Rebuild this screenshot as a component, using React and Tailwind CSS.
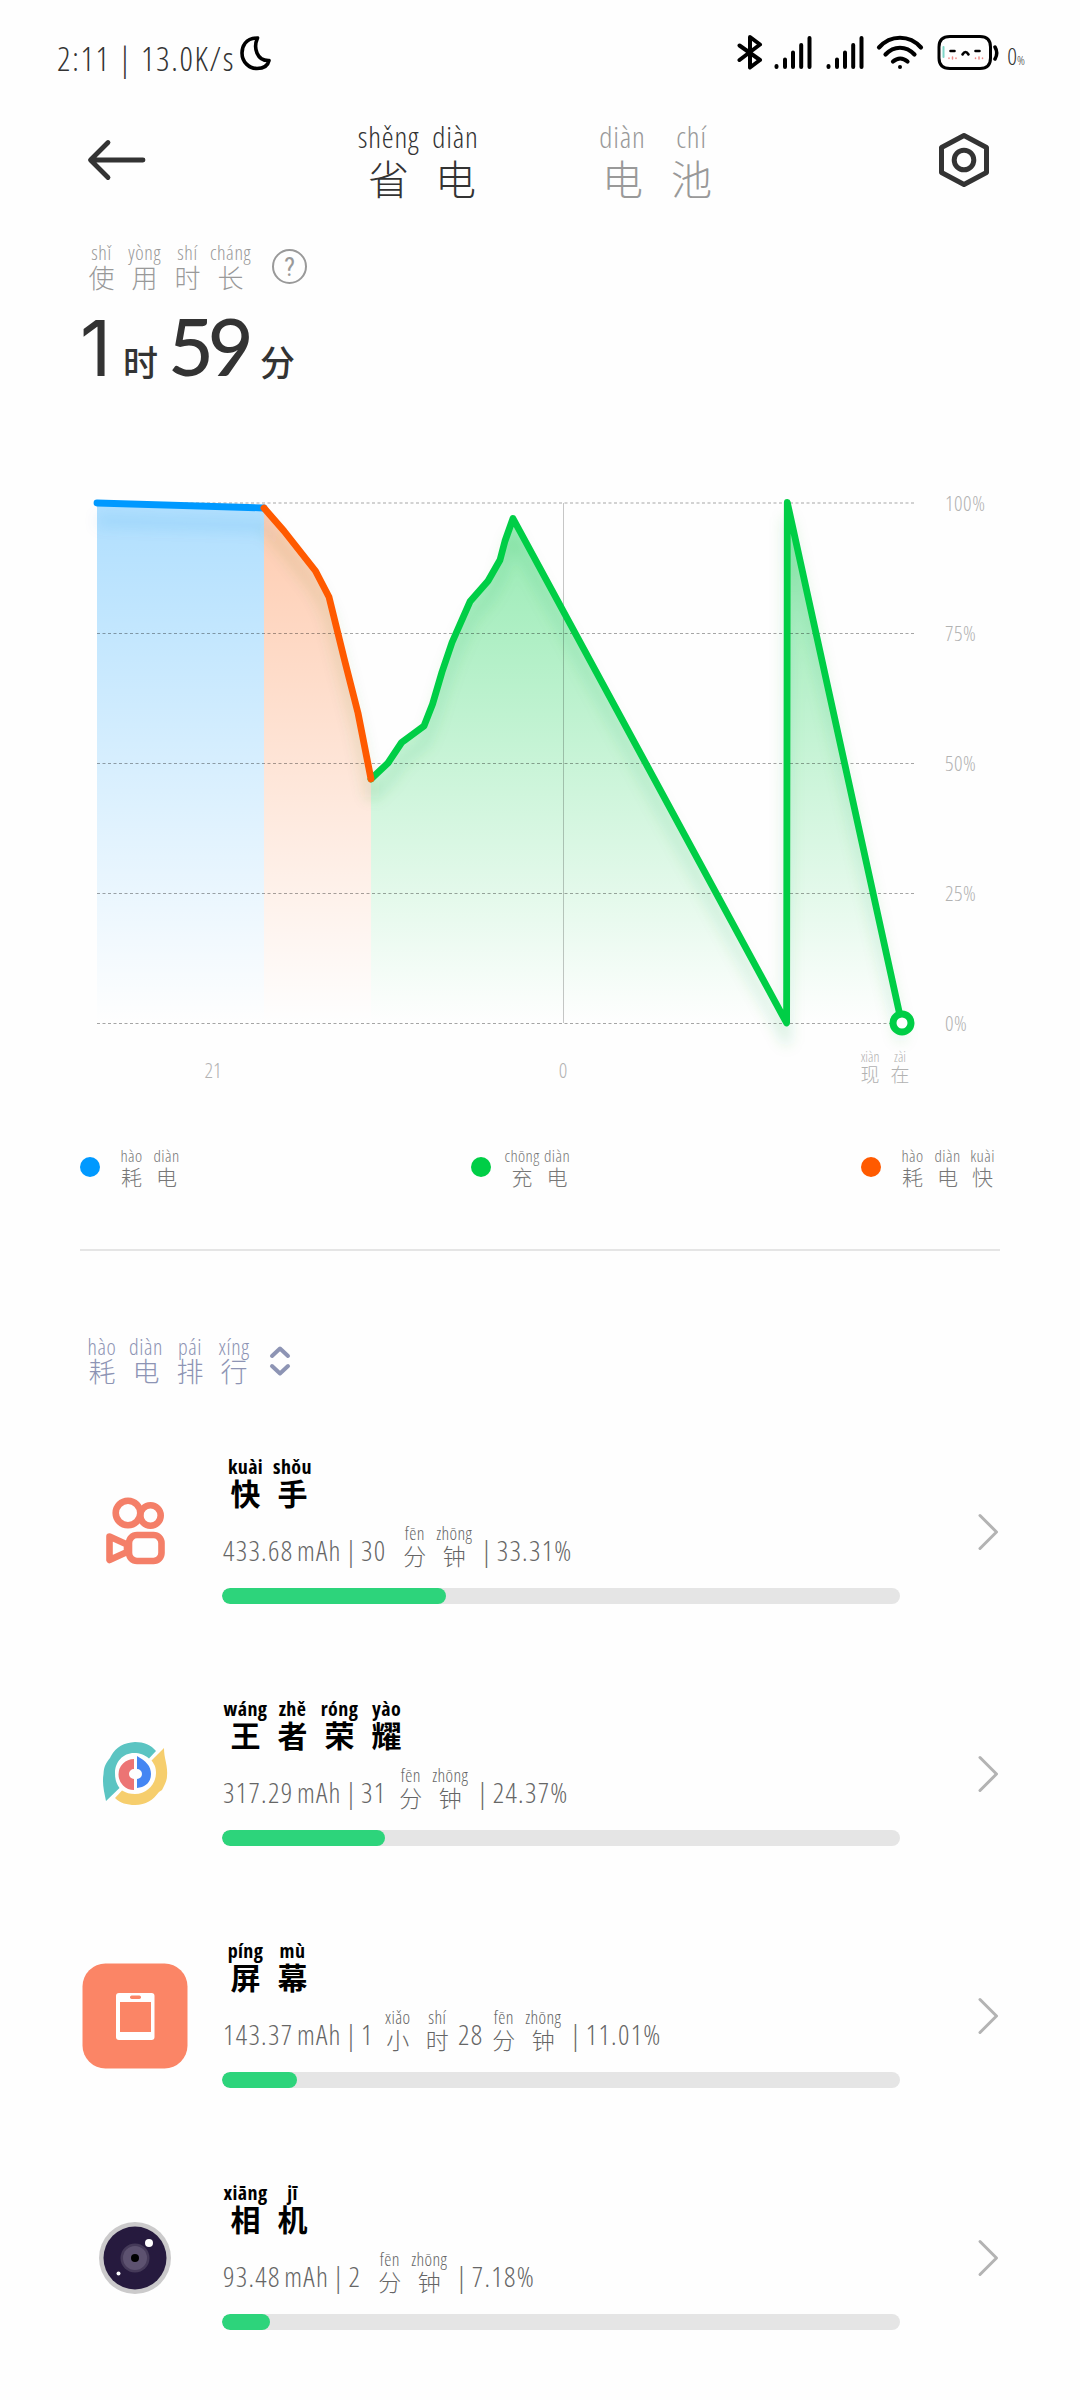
import React, { useState } from "react";

const COLORS = { drain: "#0099ff", charge: "#00ce46", fast: "#ff5a00" };

const drainPoints = "97,503 264,508";
const fastPoints = "264,508 284,531 315.5,571 329,597 344,658 358,713 371,779";
const chargePoints =
  "371,779 388,763 401.6,742.5 424,726 432.6,704 442,672 452,642.5 470,601.6 488,581 500,560 505,541 513,518.5 786.6,1023 787.3,502.5 901.6,1023";

const gridLines = [
  { y: 503, label: "100%" },
  { y: 633.5, label: "75%" },
  { y: 763.5, label: "50%" },
  { y: 893.5, label: "25%" },
  { y: 1023.5, label: "0%" },
];

const legend = [
  { color: "bg-[#0099ff]", chars: [["耗", "hào"], ["电", "diàn"]] },
  { color: "bg-[#00ce46]", chars: [["充", "chōng"], ["电", "diàn"]] },
  { color: "bg-[#ff5a00]", chars: [["耗", "hào"], ["电", "diàn"], ["快", "kuài"]] },
];

const minutes = [["分", "fēn"], ["钟", "zhōng"]];

const apps = [
  {
    id: "kuaishou",
    icon: <KuaishouIcon />,
    name: [["快", "kuài"], ["手", "shǒu"]],
    percent: 33,
    detail: [
      { text: "433.68 mAh | 30", width: "w-[173px]" },
      { chars: minutes },
      { text: "| 33.31%", width: "pl-[7px]" },
    ],
  },
  {
    id: "wangzhe",
    icon: <WangzheIcon />,
    name: [["王", "wáng"], ["者", "zhě"], ["荣", "róng"], ["耀", "yào"]],
    percent: 24,
    detail: [
      { text: "317.29 mAh | 31", width: "w-[169px]" },
      { chars: minutes },
      { text: "| 24.37%", width: "pl-[7px]" },
    ],
  },
  {
    id: "screen",
    icon: <ScreenIcon />,
    name: [["屏", "píng"], ["幕", "mù"]],
    percent: 11,
    detail: [
      { text: "143.37 mAh | 1", width: "w-[156px]" },
      { chars: [["小", "xiǎo"], ["时", "shí"]] },
      { text: "28", width: "w-[27px]" },
      { chars: minutes },
      { text: "| 11.01%", width: "pl-[7px]" },
    ],
  },
  {
    id: "camera",
    icon: <CameraIcon />,
    name: [["相", "xiāng"], ["机", "jī"]],
    percent: 7.1,
    detail: [
      { text: "93.48 mAh | 2", width: "w-[148px]" },
      { chars: minutes },
      { text: "| 7.18%", width: "pl-[7px]" },
    ],
  },
];

// Chinese characters with their pinyin above
function Pinyin({ chars, col, top, bottom, className = "" }) {
  return (
    <div className={`flex ${className}`}>
      {chars.map(([hanzi, py], i) => (
        <div key={i} className={`flex flex-col items-center shrink-0 whitespace-nowrap ${col}`}>
          <span className={top}>{py}</span>
          <span className={`font-['Noto_Sans_CJK_SC',sans-serif] ${bottom}`}>{hanzi}</span>
        </div>
      ))}
    </div>
  );
}

function KuaishouIcon() {
  return (
    <svg width="106" height="106" viewBox="0 0 106 106" fill="none" stroke="#f47f68" strokeWidth="6.6" strokeLinejoin="round">
      <circle cx="46" cy="34" r="12.3" />
      <circle cx="68.5" cy="36.5" r="10.2" />
      <rect x="47" y="56" width="32.5" height="26" rx="8" />
      <path d="M27.500 57.500 L45 65.500 V73 L27.500 81 Z" />
    </svg>
  );
}

function WangzheIcon() {
  return (
    <svg width="106" height="106" viewBox="0 0 106 106">
      <path d="M24 80 C22 70 20 62 21.500 53 C22 45 24 42 28 37 L29 35 C34 26 42 21.500 53 21 C62 21 69 24 74 30 L67 37.500 C62 33.500 58 32 52 32 C41 32 33 41 33 52 C33 58 34 62 37.500 67 Z" fill="#5bc4c2" />
      <path d="M82 27 C82 38 86 44 85 55 C85 60 82 65 80 69 L77 71 C71 79 64 84 53 84 C45 84 38 82 33 77 L40 69.500 C44 72 48 73 53 73 C65 73 74 63 74 52 C74 47 73 44 69.500 39.500 Z" fill="#f6ce6d" />
      <path d="M52 38 V48 A5 5 0 0 0 52 58 V69 A15.500 15.500 0 0 1 52 38 Z" fill="#ec7474" />
      <path d="M55 35 C64 40 69 45 69 53 C69 61 64 66 55 67 V58 A5 5 0 0 0 55 48 Z" fill="#4586f3" />
    </svg>
  );
}

function ScreenIcon() {
  return (
    <svg width="106" height="106" viewBox="0 0 106 106">
      <rect x="0.500" y="0.500" width="105" height="105" rx="23" fill="#fb8566" />
      <rect x="34" y="30" width="38.500" height="47" rx="3" fill="#fff" />
      <rect x="38" y="39" width="31" height="30" fill="#fb8566" />
      <rect x="48" y="32.500" width="11" height="3.500" rx="1.700" fill="#fb8566" />
    </svg>
  );
}

function CameraIcon() {
  return (
    <svg width="106" height="106" viewBox="0 0 106 106">
      <circle cx="53" cy="53" r="36" fill="#cbcacb" />
      <circle cx="53" cy="53" r="31.500" fill="#261a3e" />
      <circle cx="53" cy="53" r="14.500" fill="#453a59" />
      <circle cx="53" cy="53" r="12" fill="#5d5270" />
      <circle cx="53" cy="53" r="4" fill="#000" />
      <circle cx="67" cy="38" r="4" fill="#fff" />
      <circle cx="36.500" cy="68.500" r="2" fill="#fff" />
    </svg>
  );
}

function Signal() {
  return (
    <svg width="38" height="36" viewBox="0 0 38 36" stroke="#000" strokeWidth="4" strokeLinecap="round">
      <path d="M2.500 32 V33 M11 25.500 V33 M19 18.500 V33 M27.200 11 V33 M35.500 4 V33" />
    </svg>
  );
}

function StatusBar() {
  return (
    <div className="flex h-[104px] pl-[57px] pr-[55px]">
      <span className="mt-[37px] w-[180px] whitespace-nowrap text-[33px] leading-[44px] tracking-[1.7px] text-[#333]">
        2:11 | 13.0K/s
      </span>
      <svg className="mt-[34px]" width="38" height="38" viewBox="0 0 38 38" fill="none" stroke="#000" strokeWidth="3.600" strokeLinejoin="round">
        <path d="M20.500 4 C8 4 5 13 5 19 C5 28 12 34.500 20 34.500 C27 34.500 31 31 32 26.500 C20 27 16 14 20.500 4 Z" />
      </svg>
      <div className="ml-auto flex pt-[34px]">
        <svg width="26" height="36" viewBox="0 0 26 36" fill="none" stroke="#000" strokeWidth="4" strokeLinecap="round" strokeLinejoin="round">
          <path d="M2.500 11.500 L23 26 L13 33.500 V3 L23 10.500 L2.500 26" />
        </svg>
        <div className="ml-[11px]"><Signal /></div>
        <div className="ml-[14px]"><Signal /></div>
        <svg className="ml-[12px]" width="48" height="36" viewBox="0 0 48 36" fill="none" stroke="#000" strokeWidth="4.200" strokeLinecap="round">
          <path d="M3 13.500 C14.500 0.500 33.500 0.500 45 13.500" />
          <path d="M9.500 20.500 C18 11.500 30 11.500 38.500 20.500" />
          <path d="M17 27.500 C21.500 23.500 27 23.500 31.500 27.500" />
          <circle cx="24" cy="33" r="2" fill="#000" stroke="none" />
        </svg>
        <svg className="ml-[12px]" width="64" height="38" viewBox="0 0 64 38" fill="none" strokeLinecap="round">
          <path d="M14 2.500 H44 Q54.500 2.500 54.500 13 V24 Q54.500 34.500 44 34.500 H14 Q3 34.500 3 24 V13 Q3 2.500 14 2.500 Z" stroke="#000" strokeWidth="3" />
          <path d="M59 13 Q62.500 19 59 25" stroke="#000" strokeWidth="3.500" />
          <path d="M7.500 13 V23" stroke="#7fd6c8" strokeWidth="2" />
          <path d="M14.500 17 H18.500 M39.500 17 H43.500 M26.500 20.500 Q29.500 15.500 32.500 20.500" stroke="#000" strokeWidth="2.600" />
          <path d="M13 24 V24.500 M16.500 23 V25 M20 24 V24.500 M39.500 24 V24.500 M43 23 V25 M46.500 24 V24.500" stroke="#ee8a86" strokeWidth="1.500" />
        </svg>
        <span className="ml-[7px] mt-[8px] flex items-baseline text-[24px] leading-[28px] text-[#333]">
          0<span className="text-[13px]">%</span>
        </span>
      </div>
    </div>
  );
}

function Header() {
  const [tab, setTab] = useState("saver");
  const style = {
    top: "text-[30px] leading-[32px] h-[34px] tracking-[0.8px]",
    bottom: "text-[41px] leading-[44px]",
  };

  return (
    <div className="flex h-[112px] items-start">
      <svg className="ml-[86px] mt-[34px]" width="60" height="44" viewBox="0 0 60 44" fill="none" stroke="#333" strokeWidth="4.800" strokeLinecap="round" strokeLinejoin="round">
        <path d="M57 22 H5 M22 4.500 L4.500 22 L22 39.500" />
      </svg>
      <button onClick={() => setTab("saver")} className={`ml-[209px] mt-[17px] ${tab === "saver" ? "text-[#333]" : "text-[#999]"}`}>
        <Pinyin chars={[["省", "shěng"], ["电", "diàn"]]} col="w-[67px]" {...style} />
      </button>
      <button onClick={() => setTab("battery")} className={`ml-[99px] mt-[17px] ${tab === "battery" ? "text-[#333]" : "text-[#999]"}`}>
        <Pinyin chars={[["电", "diàn"], ["池", "chí"]]} col="w-[69px]" {...style} />
      </button>
      <svg className="ml-[210px] mt-[27px]" width="56" height="58" viewBox="0 0 56 58" fill="none" stroke="#333" strokeWidth="5" strokeLinejoin="round">
        <path d="M28 4.500 L50.500 16.500 V41.500 L28 53.500 L5.500 41.500 V16.500 Z" />
        <circle cx="28" cy="29" r="9.800" />
      </svg>
    </div>
  );
}

function UsageTime() {
  return (
    <div className="mt-[27px] h-[237px] pl-[80px]">
      <div className="flex text-[#999]">
        <Pinyin
          chars={[["使", "shǐ"], ["用", "yòng"], ["时", "shí"], ["长", "cháng"]]}
          col="w-[43px]"
          top="text-[20px] leading-[20px] h-[20px] tracking-[0.6px]"
          bottom="text-[26px] leading-[28px]"
        />
        <div className="ml-[20px] mt-[6px] flex size-[35px] items-center justify-center rounded-full border-[2.5px] border-[#999] font-[Roboto,sans-serif] text-[26px] font-normal leading-none">
          ?
        </div>
      </div>
      <div className="mt-[9px] flex items-baseline text-[#333]">
        <span className="w-[43px] font-[Inter,sans-serif] text-[77px] font-normal leading-[92px]">1</span>
        <span className="w-[45px] font-['Noto_Sans_CJK_SC',sans-serif] text-[35px] font-medium">时</span>
        <span className="w-[92px] font-[Lato,sans-serif] text-[79px] font-medium leading-[92px] tracking-[-6px]">59</span>
        <span className="font-['Noto_Sans_CJK_SC',sans-serif] text-[35px] font-medium">分</span>
      </div>
    </div>
  );
}

function Area({ id, color, opacity, points, from, to }) {
  return (
    <>
      <linearGradient id={id} gradientUnits="userSpaceOnUse" x1="0" x2="0" y1="503" y2="1023">
        <stop offset="0" stopColor={color} stopOpacity={opacity} />
        <stop offset="1" stopColor={color} stopOpacity="0" />
      </linearGradient>
      <polygon points={`${from},1023 ${points} ${to},1023`} fill={`url(#${id})`} />
    </>
  );
}

function BatteryChart() {
  return (
    <svg className="ml-[80px] block" width="920" height="620" viewBox="80 480 920 620" fill="none">
      <filter id="blur" filterUnits="userSpaceOnUse" x="60" y="480" width="940" height="620">
        <feGaussianBlur stdDeviation="7" />
      </filter>
      <Area id="drainFill" color={COLORS.drain} opacity="0.31" points={drainPoints} from="97" to="264" />
      <Area id="fastFill" color={COLORS.fast} opacity="0.31" points={fastPoints} from="264" to="371" />
      <Area id="chargeFill" color={COLORS.charge} opacity="0.42" points={chargePoints} from="371" to="901" />

      <g filter="url(#blur)" strokeWidth="9" strokeOpacity="0.14" strokeLinejoin="round" transform="translate(0 18)">
        <polyline points={drainPoints} stroke="#0088dd" />
        <polyline points={fastPoints} stroke="#4d7a20" />
        <polyline points={chargePoints} stroke="#10a040" />
      </g>

      {gridLines.map(({ y, label }) => (
        <g key={label}>
          <line x1="97" x2="914" y1={y} y2={y} stroke="#000" strokeOpacity="0.35" strokeWidth="1" strokeDasharray="3 2.500" />
          <text x="945" y={y + 7.5} fontSize="21" letterSpacing="0.500" fill="#b2b2b2">{label}</text>
        </g>
      ))}
      <line x1="563.500" x2="563.500" y1="503" y2="1023" stroke="#000" strokeOpacity="0.22" />

      <g strokeWidth="6.800" strokeLinejoin="round" strokeLinecap="round">
        <polyline points={chargePoints} stroke={COLORS.charge} />
        <polyline points={drainPoints} stroke={COLORS.drain} />
        <polyline points={fastPoints} stroke={COLORS.fast} />
      </g>
      <circle cx="902" cy="1023" r="9" fill="#fff" stroke={COLORS.charge} strokeWidth="7" />

      <g fill="#b2b2b2" textAnchor="middle">
        <text x="213" y="1078" fontSize="21">21</text>
        <text x="563" y="1078" fontSize="21">0</text>
        <g fontSize="14">
          <text x="870" y="1062">xiàn</text>
          <text x="900" y="1062">zài</text>
        </g>
        <g fontSize="19" fontFamily="'Noto Sans CJK SC', sans-serif">
          <text x="870" y="1082">现</text>
          <text x="900" y="1082">在</text>
        </g>
      </g>
    </svg>
  );
}

function AppRow({ app }) {
  return (
    <div className="flex h-[242px]">
      <div className="mt-[23px] w-[140px] shrink-0">{app.icon}</div>
      <div className="w-[678px] shrink-0">
        <Pinyin
          chars={app.name}
          col="w-[47px]"
          top="text-[20px] leading-[22px] h-[22px] font-bold tracking-[0.4px]"
          bottom="text-[30px] leading-[28px] font-bold"
          className="text-black"
        />
        <div className="mt-[17px] flex h-[50px] text-[28px] leading-[30px] tracking-[1.3px] text-[#666]">
          {app.detail.map((part, i) =>
            part.chars ? (
              <Pinyin
                key={i}
                chars={part.chars}
                col="w-[39.5px]"
                top="text-[18px] leading-[20px] h-[21px] tracking-[0.4px]"
                bottom="text-[23px] leading-[23px] tracking-normal"
              />
            ) : (
              <span key={i} className={`mt-[12px] shrink-0 whitespace-nowrap pl-[1px] [word-spacing:-3px] ${part.width}`}>{part.text}</span>
            )
          )}
        </div>
        <div className="mt-[15px] h-[16px] overflow-hidden rounded-full bg-[#e5e5e5]">
          <div className="h-full rounded-full bg-[#2dd47b]" style={{ width: `${app.percent}%` }} />
        </div>
      </div>
      <svg className="ml-[76px] mt-[56px]" width="24" height="40" viewBox="0 0 24 40" fill="none" stroke="#b3b3b3" strokeWidth="3" strokeLinecap="round" strokeLinejoin="round">
        <path d="M4 3.500 L20.500 20 L4 36.500" />
      </svg>
    </div>
  );
}

export default function App() {
  return (
    <div className="h-[2400px] w-[1080px] overflow-hidden bg-[#fefefe] font-['Open_Sans','Noto_Sans_CJK_SC',sans-serif] font-light [font-stretch:75%]">
      <StatusBar />
      <Header />
      <UsageTime />
      <BatteryChart />

      <div className="mx-[80px] flex h-[151px] justify-between border-b-2 border-[#e5e5e5] pt-[47px]">
        {legend.map((item, i) => (
          <div key={i} className="flex items-start">
            <span className={`mt-[10px] size-[20px] rounded-full ${item.color}`} />
            <Pinyin
              chars={item.chars}
              col="w-[35px]"
              top="text-[17px] leading-[18px] h-[18px] tracking-[0.4px]"
              bottom="text-[21px] leading-[22px]"
              className="ml-[14px] text-[#777]"
            />
          </div>
        ))}
      </div>

      <div className="mt-[83px] flex h-[122px] pl-[80px] text-[#8d94b4]">
        <Pinyin
          chars={[["耗", "hào"], ["电", "diàn"], ["排", "pái"], ["行", "xíng"]]}
          col="w-[44px]"
          top="text-[22px] leading-[24px] h-[24px] tracking-[0.6px]"
          bottom="text-[27px] leading-[26px]"
        />
        <svg className="ml-[12px] mt-[10px]" width="24" height="34" viewBox="0 0 24 34" fill="none" stroke="#8d94b4" strokeWidth="4" strokeLinecap="round" strokeLinejoin="round">
          <path d="M4 12 L12 4.500 L20 12 M4 22 L12 29.500 L20 22" />
        </svg>
      </div>

      <div className="pl-[82px]">
        {apps.map((app) => (
          <AppRow key={app.id} app={app} />
        ))}
      </div>
    </div>
  );
}
